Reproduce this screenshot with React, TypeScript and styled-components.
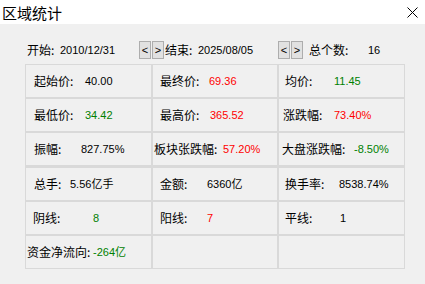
import React from 'react';
import styled, { createGlobalStyle } from 'styled-components';

const GlobalStyle = createGlobalStyle`
    html, body {
        margin: 0;
        padding: 0;
        background: #f0f0f0;
    }
`;

const Window = styled.div`
    width: 425px;
    height: 284px;
    background: #f0f0f0;
    display: flex;
    flex-direction: column;
    overflow: hidden;
    color: #000;
`;

const TitleBar = styled.div`
    height: 24px;
    background: #fff;
    display: flex;
    align-items: center;
    justify-content: space-between;
    padding: 0 7px 0 2px;
    box-sizing: border-box;
`;

const Title = styled.span`
    font-family: "Noto Sans CJK SC", sans-serif;
    font-size: 15px;
    line-height: 1;
`;

const Toolbar = styled.div`
    display: flex;
    align-items: center;
    height: 18px;
    margin-top: 17px;
    padding-left: 27px;
`;

const Field = styled.div<{ $w?: number; $ml?: number }>`
    display: flex;
    align-items: center;
    width: ${(p) => (p.$w ? `${p.$w}px` : 'auto')};
    margin-left: ${(p) => p.$ml || 0}px;
`;

const Label = styled.span<{ $w: number }>`
    font-family: "Noto Sans CJK SC", sans-serif;
    font-size: 12px;
    line-height: 1;
    width: ${(p) => p.$w}px;
    flex: none;
    white-space: nowrap;
`;

const Value = styled.span<{ $c?: string }>`
    font-family: "Liberation Sans", "Noto Sans CJK SC", sans-serif;
    font-size: 11px;
    line-height: 1;
    white-space: nowrap;
    color: ${(p) => p.$c || '#000'};
`;

const NavPair = styled.div`
    display: flex;
    gap: 1px;
`;

const NavButton = styled.button`
    width: 12px;
    height: 18px;
    padding: 0;
    margin: 0;
    box-sizing: border-box;
    border: 1px solid #adadad;
    background: #e1e1e1;
    font-family: "Liberation Sans", sans-serif;
    font-size: 11px;
    line-height: 16px;
    color: #000;
    display: flex;
    align-items: center;
    justify-content: center;
`;

const Grid = styled.div`
    display: grid;
    grid-template-columns: 127px 126px 127px;
    margin: 5px 0 0 25px;
    width: 380px;
`;

const Cell = styled.div<{ $pad: number; $split?: boolean }>`
    box-sizing: border-box;
    height: ${(p) => (p.$split ? 35 : 34)}px;
    border: 1px solid #d9d9d9;
    border-top-width: ${(p) => (p.$split ? 2 : 1)}px;
    display: flex;
    align-items: center;
    padding-left: ${(p) => p.$pad}px;
`;

const RED = '#ff0000';
const GREEN = '#008000';

type Item = { label?: string; value?: string; color?: string; l?: number; v?: number };

const rows: Item[][] = [
    [
        { label: '起始价:', value: '40.00', l: 9, v: 60 },
        { label: '最终价:', value: '69.36', color: RED, l: 8, v: 57 },
        { label: '均价:', value: '11.45', color: GREEN, l: 7, v: 56 },
    ],
    [
        { label: '最低价:', value: '34.42', color: GREEN, l: 9, v: 60 },
        { label: '最高价:', value: '365.52', color: RED, l: 8, v: 58 },
        { label: '涨跌幅:', value: '73.40%', color: RED, l: 5, v: 56 },
    ],
    [
        { label: '振幅:', value: '827.75%', l: 9, v: 56 },
        { label: '板块张跌幅:', value: '57.20%', color: RED, l: 2, v: 71 },
        { label: '大盘涨跌幅:', value: '-8.50%', color: GREEN, l: 4, v: 76 },
    ],
    [
        { label: '总手:', value: '5.56亿手', l: 9, v: 45 },
        { label: '金额:', value: '6360亿', l: 8, v: 55 },
        { label: '换手率:', value: '8538.74%', l: 7, v: 61 },
    ],
    [
        { label: '阴线:', value: '8', color: GREEN, l: 8, v: 68 },
        { label: '阳线:', value: '7', color: RED, l: 8, v: 55 },
        { label: '平线:', value: '1', l: 7, v: 62 },
    ],
    [{ label: '资金净流向:', value: '-264亿', color: GREEN, l: 2, v: 68 }, {}, {}],
];

function CloseIcon() {
    return (
        <svg width="11" height="11" viewBox="0 0 11 11">
            <path d="M0.5 0.5 L10.5 10.5 M10.5 0.5 L0.5 10.5" stroke="#000" strokeWidth="1" fill="none" />
        </svg>
    );
}

function Nav() {
    return (
        <NavPair>
            <NavButton>&lt;</NavButton>
            <NavButton>&gt;</NavButton>
        </NavPair>
    );
}

function App() {
    return (
        <Window>
            <GlobalStyle />
            <TitleBar>
                <Title>区域统计</Title>
                <CloseIcon />
            </TitleBar>
            <Toolbar>
                <Field $w={112}>
                    <Label $w={33}>开始:</Label>
                    <Value>2010/12/31</Value>
                </Field>
                <Nav />
                <Field $w={113} $ml={1}>
                    <Label $w={33}>结束:</Label>
                    <Value>2025/08/05</Value>
                </Field>
                <Nav />
                <Field $ml={6}>
                    <Label $w={59}>总个数:</Label>
                    <Value>16</Value>
                </Field>
            </Toolbar>
            <Grid>
                {rows.map((row, r) =>
                    row.map((item, c) => (
                        <Cell key={`${r}-${c}`} $pad={(item.l || 1) - 1} $split={r === 3}>
                            {item.label && <Label $w={(item.v || 0) - (item.l || 0)}>{item.label}</Label>}
                            {item.value && <Value $c={item.color}>{item.value}</Value>}
                        </Cell>
                    )),
                )}
            </Grid>
        </Window>
    );
}

export default App;
